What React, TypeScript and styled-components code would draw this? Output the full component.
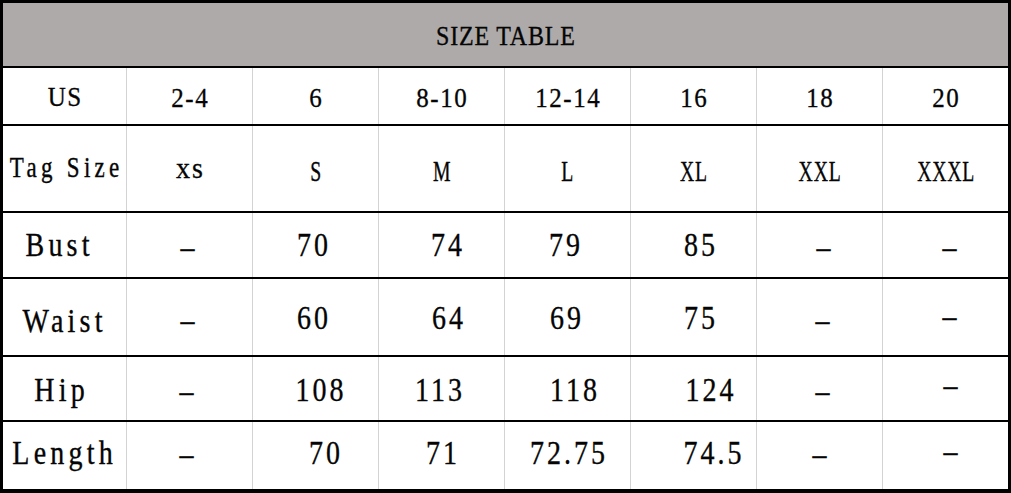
import styled, { createGlobalStyle } from 'styled-components';

interface FontSpec {
  size: number;
  ls: number;
  sx: number;
  sy: number;
}

type Entry = { t: string; dx?: number; dy?: number; font?: FontSpec };

interface RowSpec {
  height: number;
  label: Entry;
  labelFont: FontSpec;
  valueFont: FontSpec;
  values: Entry[];
}

const TITLE_FONT: FontSpec = { size: 24, ls: 0.8, sx: 1, sy: 1.12 };
const US_FONT: FontSpec = { size: 25, ls: 1.5, sx: 1, sy: 1.13 };
const TAG_LABEL: FontSpec = { size: 23, ls: 4.3, sx: 1, sy: 1.25 };
const TAG_VALUE: FontSpec = { size: 24, ls: 1, sx: 0.82, sy: 1.25 };
const TAG_SMALL: FontSpec = { size: 28, ls: 2, sx: 1, sy: 1.05 };
const BODY_LABEL: FontSpec = { size: 28, ls: 4.2, sx: 1, sy: 1.19 };
const BODY_VALUE: FontSpec = { size: 28, ls: 3, sx: 1, sy: 1.17 };

const e = (t: string, dx = 0, dy = 0, font?: FontSpec): Entry => ({ t, dx, dy, font });

const ROWS: RowSpec[] = [
  {
    height: 56,
    label: e('US'),
    labelFont: US_FONT,
    valueFont: US_FONT,
    values: ['2-4', '6', '8-10', '12-14', '16', '18', '20'].map((v) => e(v, 0, 1)),
  },
  {
    height: 85,
    label: e('Tag Size', 0, -1),
    labelFont: TAG_LABEL,
    valueFont: TAG_VALUE,
    values: [e('xs', 0, 0, TAG_SMALL), ...['S', 'M', 'L', 'XL', 'XXL', 'XXXL'].map((v) => e(v, 0, 2))],
  },
  {
    height: 64,
    label: e('Bust', -7, 0),
    labelFont: BODY_LABEL,
    valueFont: BODY_VALUE,
    values: [e('–', -2, 2), e('70', -3), e('74', 5), e('79', -3), e('85', 6), e('–', 4, 2), e('–', 4, 2)],
  },
  {
    height: 76,
    label: e('Waist', -2, 4),
    labelFont: BODY_LABEL,
    valueFont: BODY_VALUE,
    values: [e('–', -2, 3), e('60', -3, 1), e('64', 6, 1), e('69', -2, 1), e('75', 6, 1), e('–', 3, 3), e('–', 4, -1)],
  },
  {
    height: 63,
    label: e('Hip', -5, 1),
    labelFont: BODY_LABEL,
    valueFont: BODY_VALUE,
    values: [e('–', -3, 2), e('108', 4, 1), e('113', -3, 1), e('118', 6, 1), e('124', 16, 1), e('–', 3, 2), e('–', 5, -4)],
  },
  {
    height: 67,
    label: e('Length', -2, -3),
    labelFont: BODY_LABEL,
    valueFont: BODY_VALUE,
    values: [e('–', -3, -2), e('70', 9, -3), e('71', 0, -3), e('72.75', 0, -3), e('74.5', 19, -3), e('–', 0, -2), e('–', 5, -5)],
  },
];

const GlobalStyle = createGlobalStyle`
  html, body {
    margin: 0;
    padding: 0;
    background: #ffffff;
  }
  body {
    font-family: "Liberation Serif", "Times New Roman", serif;
    color: #000;
  }
`;

const Frame = styled.div`
  width: 1011px;
  height: 493px;
  box-sizing: border-box;
  border-style: solid;
  border-color: #000;
  border-width: 3px 3px 4px 3px;
  display: flex;
  flex-direction: column;
  background: #fff;
`;

const TitleBar = styled.div`
  height: 63px;
  background: #aeaaa9;
  display: flex;
  align-items: center;
  justify-content: center;
`;

const Row = styled.div<{ $h: number }>`
  height: ${({ $h }) => $h}px;
  border-top: 2px solid #000;
  display: grid;
  grid-template-columns: 123px repeat(7, 126px);
`;

const Cell = styled.div<{ $first?: boolean }>`
  display: flex;
  align-items: center;
  justify-content: center;
  border-left: ${({ $first }) => ($first ? 'none' : '1px solid #d3d3d3')};
  overflow: hidden;
`;

const Text = styled.span<{ $f: FontSpec; $dx?: number; $dy?: number }>`
  display: inline-block;
  font-family: "Liberation Serif", "Times New Roman", serif;
  font-size: ${({ $f }) => $f.size}px;
  line-height: 1;
  white-space: pre;
  letter-spacing: ${({ $f }) => $f.ls}px;
  padding-left: ${({ $f }) => $f.ls}px;
  color: #050505;
  -webkit-text-stroke: 0.3px #050505;
  transform: translate(${({ $dx = 0 }) => $dx}px, ${({ $dy = 0 }) => $dy}px)
    scale(${({ $f }) => $f.sx}, ${({ $f }) => $f.sy});
`;

export default function App() {
  return (
    <>
      <GlobalStyle />
      <Frame>
        <TitleBar>
          <Text $f={TITLE_FONT} $dy={1}>SIZE TABLE</Text>
        </TitleBar>
        {ROWS.map((row) => (
          <Row key={row.label.t} $h={row.height}>
            <Cell $first>
              <Text $f={row.labelFont} $dx={row.label.dx} $dy={row.label.dy}>
                {row.label.t}
              </Text>
            </Cell>
            {row.values.map((v, i) => (
              <Cell key={i}>
                <Text $f={v.font ?? row.valueFont} $dx={v.dx} $dy={v.dy}>
                  {v.t}
                </Text>
              </Cell>
            ))}
          </Row>
        ))}
      </Frame>
    </>
  );
}
